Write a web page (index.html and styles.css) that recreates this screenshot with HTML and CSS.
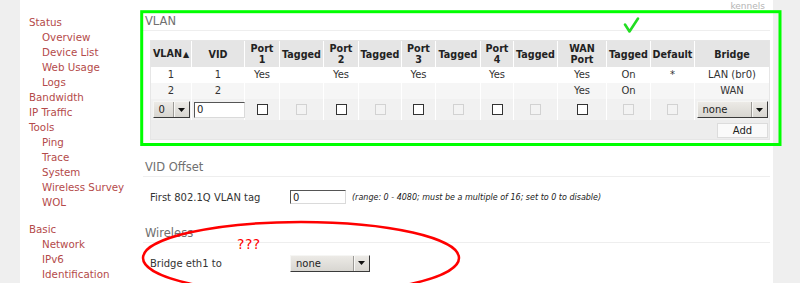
FILE: index.html
```html
<!DOCTYPE html>
<html>
<head>
  <meta charset="utf-8">
  <link rel="stylesheet" href="styles.css">
</head>
<body>
  <div class="page">
    <div class="sidebar">
      <a class="nav-item" href="#">Status</a>
      <a class="nav-item sub" href="#">Overview</a>
      <a class="nav-item sub" href="#">Device List</a>
      <a class="nav-item sub" href="#">Web Usage</a>
      <a class="nav-item sub" href="#">Logs</a>
      <a class="nav-item" href="#">Bandwidth</a>
      <a class="nav-item" href="#">IP Traffic</a>
      <a class="nav-item" href="#">Tools</a>
      <a class="nav-item sub" href="#">Ping</a>
      <a class="nav-item sub" href="#">Trace</a>
      <a class="nav-item sub" href="#">System</a>
      <a class="nav-item sub" href="#">Wireless Survey</a>
      <a class="nav-item sub" href="#">WOL</a>
      <a class="nav-item group" href="#">Basic</a>
      <a class="nav-item sub" href="#">Network</a>
      <a class="nav-item sub" href="#">IPv6</a>
      <a class="nav-item sub" href="#">Identification</a>
    </div>

    <div class="main">
      <div class="hostname">kennels</div>

      <div class="section">
        <div class="section-title">VLAN</div>
        <div class="section-body">
          <table class="vlan-table">
            <colgroup>
              <col style="width: 40px"><col style="width: 53px">
              <col style="width: 35px"><col style="width: 44px">
              <col style="width: 35px"><col style="width: 43px">
              <col style="width: 34px"><col style="width: 45px">
              <col style="width: 33px"><col style="width: 44px">
              <col style="width: 49px"><col style="width: 44px">
              <col style="width: 44px"><col style="width: 75px">
            </colgroup>
            <tr>
              <th>VLAN<span class="sort">▲</span></th>
              <th>VID</th>
              <th>Port<br>1</th>
              <th>Tagged</th>
              <th>Port<br>2</th>
              <th>Tagged</th>
              <th>Port<br>3</th>
              <th>Tagged</th>
              <th>Port<br>4</th>
              <th>Tagged</th>
              <th>WAN<br>Port</th>
              <th>Tagged</th>
              <th>Default</th>
              <th>Bridge</th>
            </tr>
            <tr class="row-odd">
              <td>1</td><td>1</td>
              <td>Yes</td><td></td>
              <td>Yes</td><td></td>
              <td>Yes</td><td></td>
              <td>Yes</td><td></td>
              <td>Yes</td><td>On</td>
              <td>*</td><td>LAN (br0)</td>
            </tr>
            <tr class="row-even">
              <td>2</td><td>2</td>
              <td></td><td></td>
              <td></td><td></td>
              <td></td><td></td>
              <td></td><td></td>
              <td>Yes</td><td>On</td>
              <td></td><td>WAN</td>
            </tr>
            <tr class="row-edit">
              <td>
                <span class="select select-vlan">
                  <span class="select-value">0</span>
                  <span class="select-arrow"><svg width="7" height="4" viewBox="0 0 7 4"><path d="M0 0h7L3.5 4z" fill="#111"/></svg></span>
                </span>
              </td>
              <td><input class="text-input vid-input" type="text" value="0"></td>
              <td><input class="check" type="checkbox"></td>
              <td><input class="check" type="checkbox" disabled></td>
              <td><input class="check" type="checkbox"></td>
              <td><input class="check" type="checkbox" disabled></td>
              <td><input class="check" type="checkbox"></td>
              <td><input class="check" type="checkbox" disabled></td>
              <td><input class="check" type="checkbox"></td>
              <td><input class="check" type="checkbox" disabled></td>
              <td><input class="check" type="checkbox"></td>
              <td><input class="check" type="checkbox" disabled></td>
              <td><input class="check" type="checkbox" disabled></td>
              <td>
                <span class="select select-bridge">
                  <span class="select-value">none</span>
                  <span class="select-arrow"><svg width="7" height="4" viewBox="0 0 7 4"><path d="M0 0h7L3.5 4z" fill="#111"/></svg></span>
                </span>
              </td>
            </tr>
            <tr class="row-footer">
              <td colspan="14"><button class="btn-add">Add</button></td>
            </tr>
          </table>
        </div>
      </div>

      <div class="section section-offset">
        <div class="section-title">VID Offset</div>
        <div class="field">
          <span class="field-label">First 802.1Q VLAN tag</span>
          <input class="text-input offset-input" type="text" value="0">
          <span class="hint">(range: 0 - 4080; must be a multiple of 16; set to 0 to disable)</span>
        </div>
      </div>

      <div class="section section-wireless">
        <div class="section-title">Wireless</div>
        <div class="field">
          <span class="field-label">Bridge eth1 to</span>
          <span class="select select-wide">
            <span class="select-value">none</span>
            <span class="select-arrow"><svg width="7" height="4" viewBox="0 0 7 4"><path d="M0 0h7L3.5 4z" fill="#111"/></svg></span>
          </span>
        </div>
      </div>
    </div>
  </div>

  <!-- hand-drawn annotations on top of the screenshot -->
  <svg class="marks" width="800" height="283" viewBox="0 0 800 283">
    <rect x="141.7" y="11.7" width="638.3" height="132.8" fill="none" stroke="#00ff00" stroke-width="3"/>
    <path d="M625 24.5 L629.5 31.5 L638 18.5" fill="none" stroke="#22dd22" stroke-width="2.6" stroke-linecap="round" stroke-linejoin="round"/>
    <ellipse cx="301" cy="258" rx="158" ry="36" fill="none" stroke="#ff0000" stroke-width="2.5"/>
  </svg>
  <div class="question">???</div>
</body>
</html>
```

FILE: styles.css
```css
body {
  margin: 0;
  height: 283px;
  overflow: hidden;
  background: #efefef;
  font-family: "DejaVu Sans", Verdana, sans-serif;
  color: #333;
}

.page {
  display: flex;
  width: 753px;
  min-height: 283px;
  margin-left: 20px;
  background: #fff;
}

/* sidebar menu */

.sidebar {
  width: 123px;
  flex-shrink: 0;
  box-sizing: border-box;
  padding: 15px 0 0 9px;
}

.nav-item {
  display: block;
  font-size: 10.3px;
  line-height: 15px;
  color: #b44a4a;
  text-decoration: none;
  white-space: nowrap;
}

.nav-item.sub {
  padding-left: 13px;
}

.nav-item.group {
  margin-top: 12px;
}

/* main column */

.main {
  flex: 1;
  padding-right: 3px;
}

.hostname {
  height: 12px;
  padding-right: 5px;
  text-align: right;
  font-size: 9px;
  line-height: 12px;
  color: #b4b4b4;
}

.section-title {
  padding-left: 2px;
  font-size: 11.5px;
  line-height: 18px;
  color: #707070;
  border-bottom: 1px solid #eeeeee;
}

.section-body {
  padding: 9px 0 0 7px;
}

.section-offset {
  margin-top: 18px;
}

.section-wireless {
  margin-top: 17px;
}

/* vlan table */

.vlan-table {
  width: 618px;
  table-layout: fixed;
  border-collapse: separate;
  border-spacing: 0;
  border: 1px solid #e6e6e6;
  font-size: 10px;
  color: #333;
}

.vlan-table th,
.vlan-table td {
  padding: 0;
  text-align: center;
  border-left: 1px solid #fff;
}

.vlan-table th:first-child,
.vlan-table td:first-child {
  border-left: none;
}

.vlan-table th {
  height: 26px;
  background: #e5e5e5;
  font-size: 9.6px;
  font-weight: bold;
  line-height: 11px;
  color: #222;
}

.sort {
  font-size: 8px;
  padding-left: 1px;
}

.vlan-table td {
  height: 16px;
  line-height: 16px;
}

.row-odd td {
  background: #fff;
}

.row-even td {
  background: #f6f6f6;
}

.row-edit td {
  height: 21px;
  background: #f1f1f1;
}

.row-footer td {
  height: 19px;
  background: #ededed;
  text-align: right;
}

.btn-add {
  width: 51px;
  height: 15px;
  margin: 1px 1px 0 0;
  padding: 0;
  border: 1px solid #dcdcdc;
  background: #fafafa;
  font: 10px "DejaVu Sans", sans-serif;
  color: #222;
  vertical-align: middle;
}

/* form controls */

.select {
  display: inline-flex;
  box-sizing: border-box;
  height: 17px;
  border: 1px solid;
  border-color: #f6f6f4 #3a3a3a #3a3a3a #f6f6f4;
  background: linear-gradient(#eceae6, #d8d6d1);
  font-size: 10px;
  color: #222;
  vertical-align: middle;
  text-align: left;
}

.select-value {
  flex: 1;
  padding-left: 5px;
  line-height: 15px;
}

.select-arrow {
  display: flex;
  align-items: center;
  justify-content: center;
  width: 15px;
  border-left: 1px solid #9c9a96;
  box-shadow: inset 1px 0 #f8f8f6;
}

.select-vlan {
  width: 37px;
}

.select-bridge {
  width: 71px;
}

.select-wide {
  width: 80px;
}

.text-input {
  box-sizing: border-box;
  margin: 0;
  padding: 0 0 0 2px;
  border: 1px solid;
  border-color: #555 #dadada #dadada #555;
  background: #fff;
  font: 10px "DejaVu Sans", sans-serif;
  color: #222;
  vertical-align: middle;
}

.vid-input {
  width: 51px;
  height: 16px;
  margin-left: 2px;
}

.offset-input {
  width: 56px;
  height: 14px;
}

.check {
  appearance: none;
  width: 11px;
  height: 11px;
  margin: 0;
  border: 1px solid #333;
  background: #fff;
  vertical-align: middle;
}

.check:disabled {
  border-color: #d2d2d2;
  background: #f3f3f3;
}

/* label rows */

.field {
  display: flex;
  align-items: center;
  height: 20px;
  margin-top: 10px;
  padding-left: 7px;
}

.field-label {
  width: 140px;
  flex-shrink: 0;
  font-size: 10px;
  color: #333;
}

.hint {
  margin-left: 6px;
  font-size: 8px;
  font-style: italic;
  color: #222;
}

/* annotations */

.marks {
  position: absolute;
  top: 0;
  left: 0;
  pointer-events: none;
}

.question {
  position: absolute;
  top: 236px;
  left: 237px;
  font-size: 14px;
  line-height: 16px;
  color: #f00;
  letter-spacing: 0.5px;
}
```
